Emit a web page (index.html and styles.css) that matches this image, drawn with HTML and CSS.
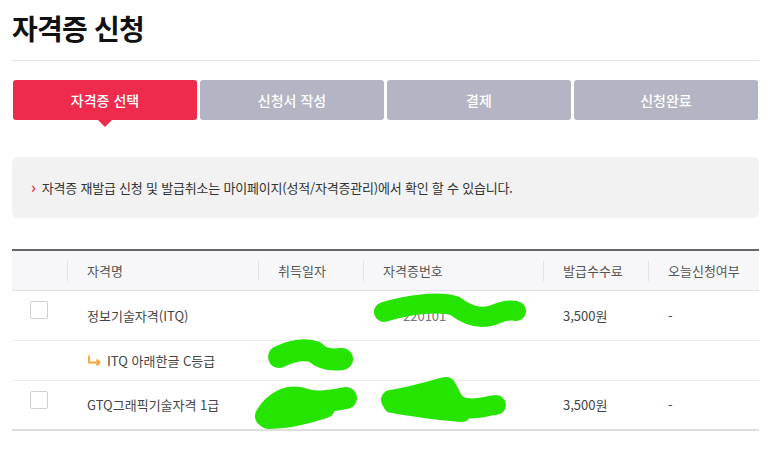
FILE: index.html
```html
<!DOCTYPE html>
<html lang="ko">
<head>
<meta charset="utf-8">
<title>자격증 신청</title>
<link rel="stylesheet" href="styles.css">
</head>
<body>
<div class="page">
  <h1 class="title">자격증 신청</h1>
  <ol class="steps">
    <li class="step active">자격증 선택</li>
    <li class="step">신청서 작성</li>
    <li class="step">결제</li>
    <li class="step">신청완료</li>
  </ol>
  <div class="notice">
    <span class="chev">›</span>
    <span>자격증 재발급 신청 및 발급취소는 마이페이지(성적/자격증관리)에서 확인 할 수 있습니다.</span>
  </div>
  <div class="table-wrap">
    <table class="list">
      <colgroup>
        <col class="c1"><col class="c2"><col class="c3"><col class="c4"><col class="c5"><col class="c6">
      </colgroup>
      <thead>
        <tr>
          <th></th>
          <th>자격명</th>
          <th>취득일자</th>
          <th>자격증번호</th>
          <th>발급수수료</th>
          <th>오늘신청여부</th>
        </tr>
      </thead>
      <tbody>
        <tr class="main">
          <td class="chk"><span class="box"></span></td>
          <td>정보기술자격(ITQ)</td>
          <td></td>
          <td><span class="hidden-num">220101</span></td>
          <td>3,500원</td>
          <td>-</td>
        </tr>
        <tr class="sub">
          <td></td>
          <td><svg class="arrow" viewBox="0 0 14 12" width="14" height="12" aria-hidden="true"><path d="M2 0.5 V7.5 H12.5 M9.5 4.5 L12.5 7.5 L9.5 10.5" fill="none" stroke="#f5a43a" stroke-width="1.8" stroke-linejoin="miter"/></svg>ITQ 아래한글 C등급</td>
          <td></td>
          <td></td>
          <td></td>
          <td></td>
        </tr>
        <tr class="main last">
          <td class="chk"><span class="box"></span></td>
          <td>GTQ그래픽기술자격 1급</td>
          <td></td>
          <td></td>
          <td>3,500원</td>
          <td>-</td>
        </tr>
      </tbody>
    </table>
    <svg class="redact" viewBox="12 249 747 182" width="747" height="182" aria-hidden="true">
      <g fill="none" stroke="#25e400" stroke-linecap="round" stroke-linejoin="round">
        <path stroke-width="20" d="M384 312 C 410 304, 440 301, 455 306 C 468 316, 482 320, 496 314 C 505 310, 511 310, 516 311"/>
        <path stroke-width="22" d="M279 357 C 290 351, 305 348, 315 352 C 322 360, 335 360, 342 359"/>
        <path stroke-width="22" d="M266 416 C 275 401, 288 396, 300 398 C 313 404, 330 401, 346 398"/>
        <path stroke-width="20" d="M268 419 C 290 419, 310 413, 325 408"/>
        <path stroke-width="20" d="M391 400 C 410 397, 430 391, 446 387 C 452 396, 451 405, 466 408 C 480 410, 489 405, 496 405"/>
        <path stroke-width="18" d="M392 404 C 415 408, 440 412, 462 413"/>
        <path stroke-width="14" d="M420 403 L 450 402 L 462 410"/>
      </g>
    </svg>
  </div>
</div>
</body>
</html>
```

FILE: styles.css
```css
* { box-sizing: border-box; }
html, body { margin: 0; padding: 0; background: #fff; }
body {
  font-family: "Noto Sans CJK KR", "Noto Sans", sans-serif;
  color: #333;
}
.page {
  width: 747px;
  margin-left: 12px;
}
.title {
  margin: 0;
  padding-top: 8px;
  height: 61px;
  border-bottom: 1px solid #e2e2e2;
  font-size: 28px;
  font-weight: 700;
  line-height: 40px;
  color: #111;
  letter-spacing: -0.8px;
}
.steps {
  list-style: none;
  margin: 19px 0 0 0;
  padding: 0 1px 0 1px;
  display: grid;
  grid-template-columns: repeat(4, 1fr);
  gap: 3px;
}
.step {
  position: relative;
  height: 40px;
  border-radius: 3px;
  background: #b3b5c4;
  color: #fff;
  font-size: 14px;
  font-weight: 500;
  display: flex;
  align-items: center;
  justify-content: center;
}
.step.active { background: #ef2b4d; }
.step.active::after {
  content: "";
  position: absolute;
  left: 50%;
  bottom: -7px;
  margin-left: -7px;
  border-left: 7px solid transparent;
  border-right: 7px solid transparent;
  border-top: 7px solid #ef2b4d;
}
.notice {
  margin-top: 37px;
  height: 61px;
  background: #f2f2f2;
  border-radius: 6px;
  padding: 0 0 0 19px;
  display: flex;
  align-items: center;
  gap: 6px;
  font-size: 13px;
  letter-spacing: -0.2px;
  color: #333;
}
.chev {
  color: #ef2b4d;
  font-weight: 700;
  font-size: 15px;
  line-height: 1;
  margin-top: -2px;
}
.table-wrap {
  position: relative;
  margin-top: 31px;
}
.list {
  width: 747px;
  border-collapse: collapse;
  table-layout: fixed;
  border-top: 2px solid #666;
  font-size: 13px;
}
.c1 { width: 55px; }
.c2 { width: 191px; }
.c3 { width: 105px; }
.c4 { width: 180px; }
.c5 { width: 105px; }
.c6 { width: 111px; }
.list th {
  position: relative;
  height: 40px;
  background: #f7f7f9;
  border-bottom: 1px solid #e3e3e6;
  font-weight: 400;
  color: #555;
  text-align: left;
  padding: 0 0 0 20px;
}
.list th + th::before {
  content: "";
  position: absolute;
  left: 0;
  top: 10px;
  height: 20px;
  border-left: 1px solid #e3e3e6;
}
.list td {
  padding: 0 0 0 20px;
  color: #444;
  border-bottom: 1px solid #ececef;
  white-space: nowrap;
}
.list tr.main td { height: 50px; }
.list tr.sub td { height: 40px; }
.list tr.last td { border-bottom: 2px solid #dedede; }
.list td.chk {
  padding: 0 0 0 18px;
  vertical-align: top;
  padding-top: 10px;
}
.box {
  display: block;
  width: 18px;
  height: 18px;
  border: 1px solid #cfcfcf;
  border-radius: 2px;
  background: #fff;
}
.arrow {
  display: inline-block;
  vertical-align: -1px;
  margin-right: 6px;
}
.hidden-num {
  position: relative;
  top: 0;
  color: #777;
  padding-left: 20px;
}
.redact {
  position: absolute;
  left: 0;
  top: 0;
  pointer-events: none;
}
```
